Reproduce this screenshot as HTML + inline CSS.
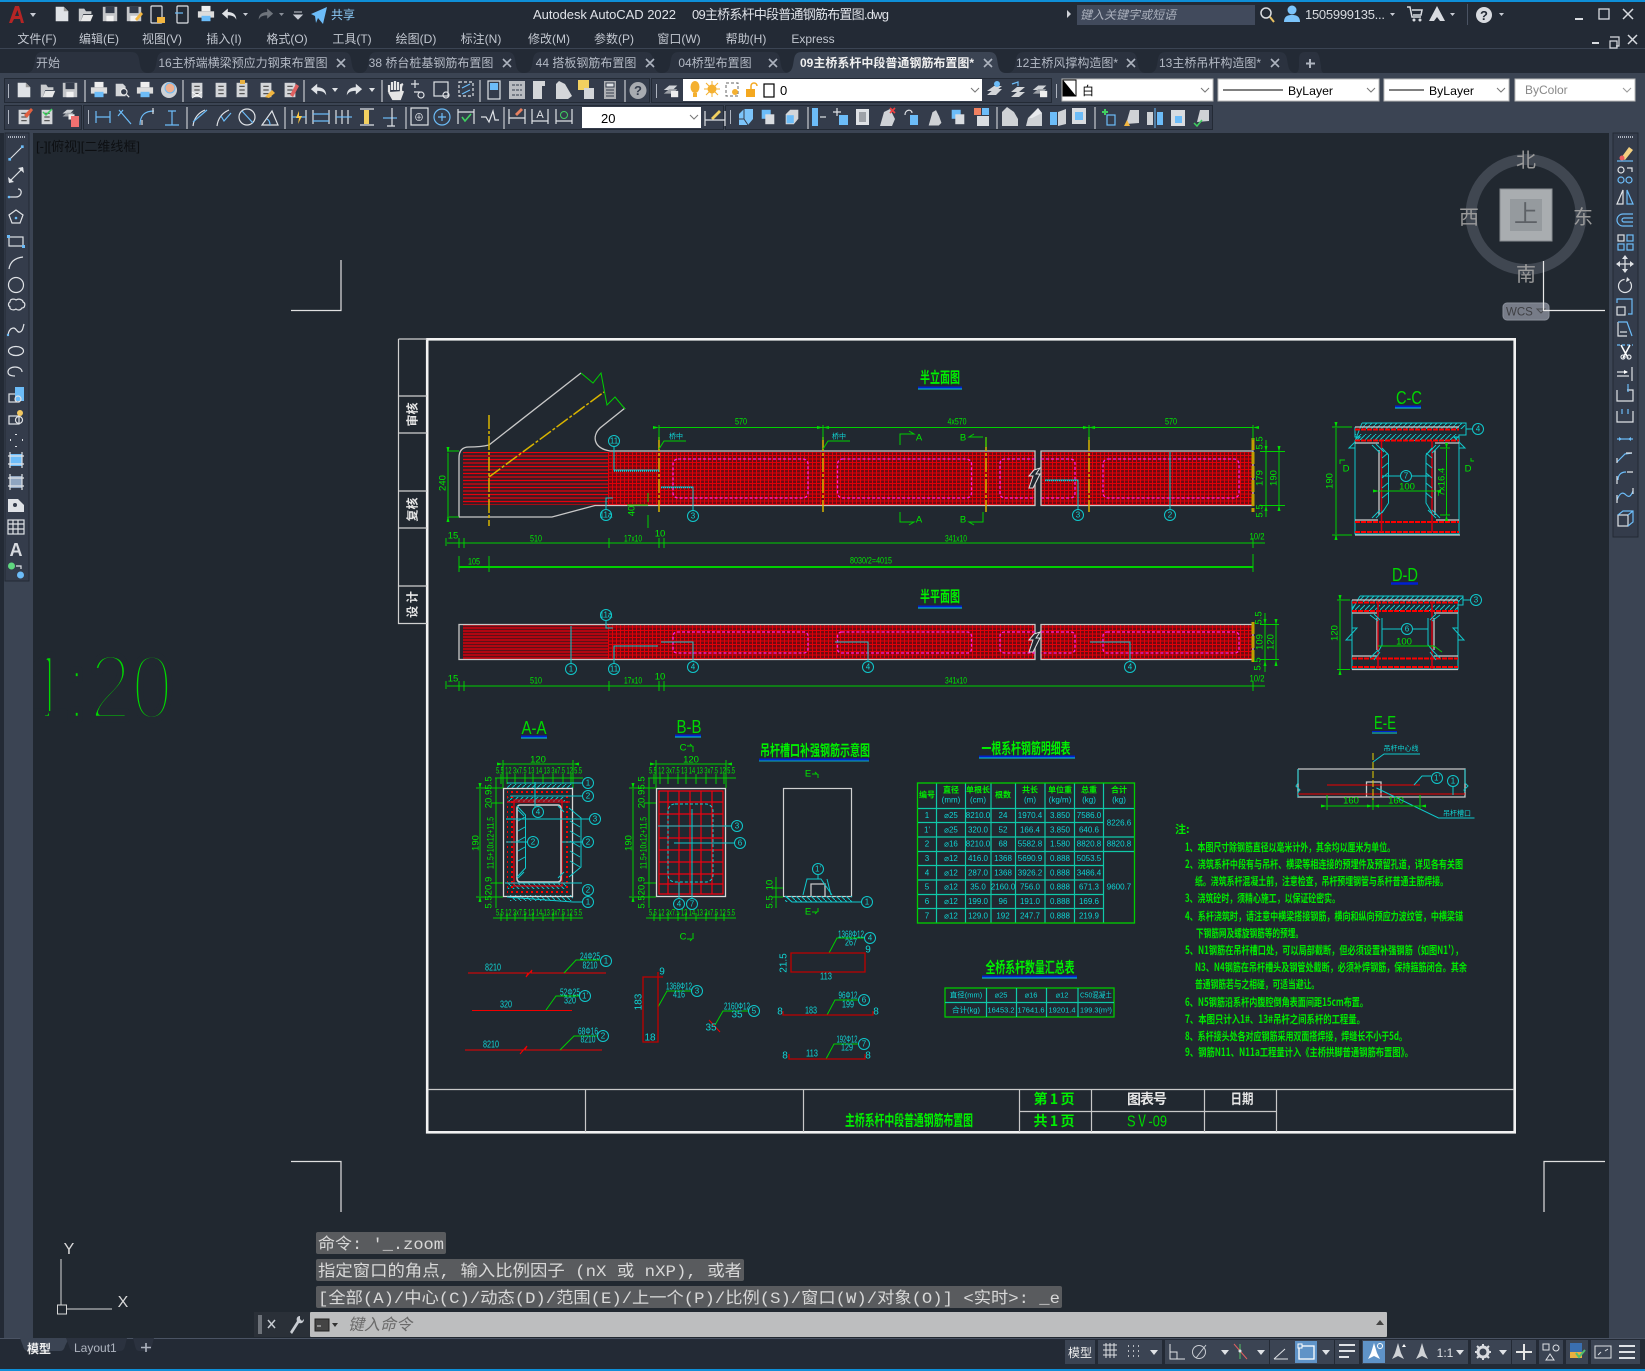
<!DOCTYPE html>
<html lang="zh"><head><meta charset="utf-8"><title>AutoCAD 2022</title>
<style>
html,body{margin:0;padding:0;width:1645px;height:1371px;overflow:hidden;background:#212830}
svg{display:block;position:absolute;left:0;top:0}
text{font-family:"Liberation Sans","Noto Sans CJK SC",sans-serif}
.m{font-size:12px;fill:#c2c7d0;text-anchor:middle}
.tb{font-size:12px;fill:#b4bac5;text-anchor:middle}
.x{stroke:#aeb4bf;stroke-width:1.6;fill:none}
.gt{font-size:9.5px;fill:#00e800;text-anchor:middle;dominant-baseline:central}
.ct{font-size:9px;fill:#10d4d4;text-anchor:middle;dominant-baseline:central}
.t8 .ct{font-size:8px}
.t7 .ct{font-size:7.5px}
.t10 .ct{font-size:10px}
.wt{font-family:"Noto Sans CJK SC",sans-serif;font-weight:700;fill:#e6e6e6;text-anchor:middle;dominant-baseline:central}
.h{font-family:"Noto Sans CJK SC",sans-serif;font-weight:700;fill:#00f000;text-anchor:middle;dominant-baseline:central}
.nt{font-family:"Noto Sans CJK SC",sans-serif;font-weight:700;font-size:11px;fill:#00e800}
.g{stroke:#00d000;fill:none;stroke-width:1}
.da{stroke:#00d000;fill:none;stroke-width:1;marker-start:url(#a);marker-end:url(#a)}
.c{stroke:#10c8cc;fill:none;stroke-width:1}
.w{stroke:#c8c8c8;fill:none;stroke-width:1.3}
.r{stroke:#f00000;fill:none;stroke-width:1}
.dr{stroke:#c00000;fill:none;stroke-width:1.3}
.mg{stroke:#ff20e0;fill:none;stroke-width:1.3;stroke-dasharray:3 2}
.y{stroke:#d8b400;fill:none;stroke-width:1.5;stroke-dasharray:14 2 3 2}
.ci{stroke:#10c8cc;fill:#212830;stroke-width:1}
.n{font-size:8px;fill:#10d4d4;text-anchor:middle;dominant-baseline:central}
.cmd{font-family:"Liberation Mono","Noto Sans CJK SC",monospace;font-size:16px;fill:#d8d8d8}
.i{fill:none;stroke:#dfe2e6;stroke-width:1.2}
.b{fill:none;stroke:#6cbcf8;stroke-width:1.2}
.f{fill:#dfe2e6}
.fb{fill:#6cbcf8}
</style></head><body>
<svg width="1645" height="1371" viewBox="0 0 1645 1371" xmlns="http://www.w3.org/2000/svg">
<defs>
<marker id="a" markerWidth="6" markerHeight="4" refX="0" refY="2" orient="auto-start-reverse" markerUnits="userSpaceOnUse"><path d="M0 2L6 0.5V3.5z" fill="#00e000"/></marker>
<pattern id="grid" width="4" height="3.5" patternUnits="userSpaceOnUse"><rect width="4" height="3.5" fill="#6e0a12"/><path d="M.5 0V3.5M0 .5H4" stroke="#e00008" stroke-width="1"/></pattern>
<pattern id="st" width="4" height="3.5" patternUnits="userSpaceOnUse"><rect width="4" height="3.5" fill="#3a1c24"/><path d="M0 1H4" stroke="#e8000c" stroke-width="1.200"/></pattern>
<pattern id="st2" width="4" height="3" patternUnits="userSpaceOnUse"><rect width="4" height="3" fill="#5e1018"/><path d="M0 1H4" stroke="#e8000c" stroke-width="1.200"/></pattern>
<pattern id="hat" width="5" height="5" patternUnits="userSpaceOnUse"><path d="M0 5L5 0" stroke="#10c8cc" stroke-width="1"/></pattern>
<pattern id="hat2" width="5" height="5" patternUnits="userSpaceOnUse"><path d="M0 0L5 5" stroke="#10c8cc" stroke-width="1"/></pattern>
<pattern id="rdot" width="5" height="5" patternUnits="userSpaceOnUse"><rect x="1" y="1" width="2" height="2" fill="#f00"/></pattern>
<pattern id="dots" width="2" height="2" patternUnits="userSpaceOnUse"><rect width="1" height="2" fill="#aeb4bf"/></pattern>
<symbol id="doc" viewBox="0 0 20 20"><path class="f" d="M3 2h9l5 5v11H3z"/><path d="M12 2v5h5" fill="#999"/></symbol>
<symbol id="fold" viewBox="0 0 20 20"><path fill="#c9cbce" d="M2 18V4h6l2 3h6v3H7l-3 8z"/><path fill="#e8e8e8" d="M7 11h11l-3 7H4z"/></symbol>
<symbol id="save" viewBox="0 0 20 20"><path fill="#c4c6c9" d="M2 2h16v16H2z"/><rect x="5" y="2" width="10" height="7" fill="#343c4b"/><rect x="6" y="12" width="8" height="6" fill="#f2f2f2"/></symbol>
<symbol id="print" viewBox="0 0 20 20"><rect x="5" y="1" width="10" height="6" fill="#eee"/><rect x="1" y="7" width="18" height="7" fill="#dcdcdc"/><rect x="5" y="12" width="10" height="6" fill="#6cbcf8"/></symbol>
<symbol id="und" viewBox="0 0 20 20"><path fill="#dfe2e6" d="M1 9l7-6v4c6 0 10 3 10 9-2-4-5-5-10-5v4z"/></symbol>
<symbol id="red" viewBox="0 0 20 20"><path fill="#dfe2e6" d="M19 9l-7-6v4C6 7 2 10 2 16c2-4 5-5 10-5v4z"/></symbol>
<symbol id="pap" viewBox="0 0 20 20"><rect x="4" y="2" width="12" height="16" fill="#d4d6d9"/><path d="M7 6h6M7 10h6M7 14h6" stroke="#555" stroke-width="1.400"/></symbol>
<symbol id="ppr" viewBox="0 0 20 20"><path fill="#d4d6d9" d="M3 3h8l3 3v11H3z"/><circle cx="12" cy="12" r="3.600" fill="#343c4b" stroke="#eee" stroke-width="1.200"/><path d="M15 15l3 3" stroke="#eee" stroke-width="1.400"/></symbol>
<symbol id="dim" viewBox="0 0 20 20"><path class="b" d="M3 4v12M17 4v12M3 10h14"/></symbol>
<symbol id="dim2" viewBox="0 0 20 20"><path class="i" d="M3 3v14M17 3v14"/><path class="b" d="M3 10h14"/><path fill="#ffc940" d="M10 4l-3 7h3l-1 6 4-8h-3z"/></symbol>
<symbol id="bl" viewBox="0 0 20 20"><rect x="3" y="2" width="10" height="10" class="fb"/><rect x="7" y="7" width="10" height="11" fill="#d9dce0"/></symbol>
<symbol id="bl2" viewBox="0 0 20 20"><path fill="#7cc4fa" d="M3 7l5-5h9v10l-5 6H3z"/><path d="M8 2v10H3M8 12l4 6" stroke="#343c4b" fill="none"/></symbol>
<symbol id="bl3" viewBox="0 0 20 20"><path fill="#d4d6d9" d="M3 7l5-5h9v10l-5 6H3z"/><rect x="4" y="8" width="8" height="9" class="fb"/></symbol>
<symbol id="lp" viewBox="0 0 20 20"><path d="M2 10l6-5h9l-5 5z" fill="#cfd2d6"/><path d="M2 14l6-5h9l-5 5z" fill="#9ea2a8"/><rect x="10" y="11" width="8" height="7" fill="#eee"/></symbol>
<symbol id="ln" viewBox="0 0 20 20"><path class="i" d="M3 17L17 3"/><rect x="1.500" y="15.500" width="3" height="3" class="fb"/><rect x="15.500" y="1.500" width="3" height="3" class="fb"/></symbol>
</defs>

<!-- base chrome -->
<rect width="1645" height="1371" fill="#232a35"/>
<rect y="0" width="1645" height="2" fill="#0e8fd8"/>
<rect y="48" width="1645" height="1" fill="#3b4453"/>
<rect y="73" width="1645" height="60" fill="#3b4453"/>
<rect x="33" y="133" width="1576" height="1205" fill="#212830"/>

<!-- scale text: eroded with canvas-coloured stroke to get a thin CAD look -->
<text transform="scale(.8,1)" x="34.500 83 112 164" y="719" font-size="93" fill="#00d800" stroke="#212830" stroke-width="6.500" stroke-linejoin="round">1:20</text>
<rect x="33" y="711" width="12" height="13" fill="#212830"/><rect x="49" y="711" width="14" height="13" fill="#212830"/>

<rect x="4" y="133" width="29" height="1205" fill="#3b4453"/>
<rect x="1609" y="133" width="36" height="1205" fill="#3b4453"/>
<rect y="1338" width="1645" height="1" fill="#4a5363"/>
<rect y="1369" width="1645" height="2" fill="#0e8fd8"/>

<!-- title bar -->
<path fill="#b52525" d="M9 23L15 6h4l5 17h-3l-1-4h-6l-2 4zm6-7h4l-1.500-6z"/>
<path d="M30 13h6l-3 4z" fill="#c8ccd4"/>
<use href="#doc" x="53" y="5" width="18" height="18"/><use href="#fold" x="77" y="5" width="18" height="18"/><use href="#save" x="101" y="5" width="18" height="18"/><use href="#save" x="125" y="5" width="18" height="18"/>
<path d="M135 19l6-7 2 2-6 7z" fill="#f2b640"/>
<rect x="151" y="6" width="11" height="17" rx="1" class="i"/><path fill="#f2b640" d="M157 17h8v6h-8z"/>
<rect x="177" y="6" width="11" height="17" rx="1" class="i"/><path d="M175 13h8" class="b"/>
<use href="#print" x="197" y="5" width="18" height="18"/>
<use href="#und" x="221" y="6" width="17" height="17"/><path d="M243 13h5l-2.500 3z" fill="#c8ccd4"/>
<use href="#red" x="257" y="6" width="17" height="17" opacity=".4"/><path d="M279 13h5l-2.500 3z" fill="#8a8f99"/>
<path d="M294 12h8M294 15h8l-4 4z" fill="#c8ccd4" stroke="#c8ccd4"/>
<path fill="#6cbcf8" d="M311 14L327 7l-4 17-5-6-2 5-1-7z"/>
<text x="331" y="19" font-size="12" fill="#8ccbf8">共享</text>
<text x="533" y="19" font-size="13" fill="#dfe2e8" textLength="143">Autodesk AutoCAD 2022</text>
<text x="692" y="19" font-size="13" fill="#dfe2e8" textLength="197">09主桥系杆中段普通钢筋布置图.dwg</text>
<path d="M1067 10l4 4-4 4z" fill="#cfd2d8"/>
<rect x="1077" y="5" width="178" height="20" fill="#414a5c"/>
<text x="1080" y="19" font-size="12" font-style="italic" fill="#aab0bc">键入关键字或短语</text>
<circle cx="1266" cy="13" r="5" fill="none" stroke="#d8dbe0" stroke-width="1.500"/><path d="M1270 17l4 5" stroke="#e8c060" stroke-width="2"/>
<circle cx="1292" cy="10" r="4.500" fill="#7cc4fa"/><path d="M1284 22c0-6 4-7 8-7s8 1 8 7z" fill="#7cc4fa"/>
<text x="1305" y="19" font-size="13" fill="#d8dbe0" textLength="80">1505999135...</text>
<path d="M1390 13h5l-2.500 3z" fill="#c8ccd4"/>
<path d="M1407 7h3l2 10h9M1412 10h10l-1 5h-8" fill="none" stroke="#d8dbe0" stroke-width="1.500"/><circle cx="1414" cy="20" r="1.500" fill="#d8dbe0"/><circle cx="1420" cy="20" r="1.500" fill="#d8dbe0"/>
<path d="M1437 6l8 15h-5l-3-4-3 4h-5z" fill="#d8dbe0"/><path d="M1450 13h5l-2.500 3z" fill="#c8ccd4"/>
<rect x="1467" y="4" width="1" height="21" fill="#4a5363"/>
<circle cx="1484" cy="15" r="8" fill="#d8dbe0"/><text x="1484" y="20" font-size="13" font-weight="700" fill="#232a35" text-anchor="middle">?</text>
<path d="M1499 13h5l-2.500 3z" fill="#c8ccd4"/>
<path d="M1575 19h8" stroke="#d8dbe0" stroke-width="2"/><rect x="1599" y="9" width="10" height="10" fill="none" stroke="#d8dbe0" stroke-width="1.300"/><path d="M1623 9l10 10M1633 9l-10 10" stroke="#d8dbe0" stroke-width="1.500"/>
<path d="M1592 43h7" stroke="#d8dbe0" stroke-width="2"/><path d="M1610 37h9v9h-3M1610 41h7v7h-7z" fill="none" stroke="#d8dbe0" stroke-width="1.200"/><path d="M1628 35l9 9M1637 35l-9 9" stroke="#d8dbe0" stroke-width="1.500"/>

<!-- menu -->
<g class="m">
<text class="m" x="37" y="43">文件(F)</text><text class="m" x="99" y="43">编辑(E)</text><text class="m" x="162" y="43">视图(V)</text><text class="m" x="224" y="43">插入(I)</text><text class="m" x="287" y="43">格式(O)</text><text class="m" x="352" y="43">工具(T)</text><text class="m" x="416" y="43">绘图(D)</text><text class="m" x="481" y="43">标注(N)</text><text class="m" x="549" y="43">修改(M)</text><text class="m" x="614" y="43">参数(P)</text><text class="m" x="679" y="43">窗口(W)</text><text class="m" x="746" y="43">帮助(H)</text><text class="m" x="813" y="43">Express</text>
</g>

<!-- tabs -->
<g fill="#2b323f">
<path d="M26 73c5 0 7-3 8-8l1-6c1-5 3-7 8-7h88c5 0 7 2 8 7l1 6c1 5 3 8 8 8z"/>
<path d="M148 73c5 0 7-3 8-8l1-6c1-5 3-7 8-7h178c5 0 7 2 8 7l1 6c1 5 3 8 8 8z"/>
<path d="M360 73c5 0 7-3 8-8l1-6c1-5 3-7 8-7h130c5 0 7 2 8 7l1 6c1 5 3 8 8 8z"/>
<path d="M524 73c5 0 7-3 8-8l1-6c1-5 3-7 8-7h104c5 0 7 2 8 7l1 6c1 5 3 8 8 8z"/>
<path d="M662 73c5 0 7-3 8-8l1-6c1-5 3-7 8-7h93c5 0 7 2 8 7l1 6c1 5 3 8 8 8z"/>
<path d="M1007 73c5 0 7-3 8-8l1-6c1-5 3-7 8-7h105c5 0 7 2 8 7l1 6c1 5 3 8 8 8z"/>
<path d="M1149 73c5 0 7-3 8-8l1-6c1-5 3-7 8-7h113c5 0 7 2 8 7l1 6c1 5 3 8 8 8z"/>
<path d="M1295 73c3 0 4-3 4-8v-6c0-5 2-7 6-7h10c3 0 4 3 5 8l1 6c0 4 1 7 3 7z"/>
</g>
<path fill="#3b4453" d="M785 73c5 0 7-3 8-8l1-6c1-5 3-7 8-7h187c5 0 7 2 8 7l1 6c1 5 3 8 8 8z"/>
<text class="tb" x="48" y="67">开始</text>
<text class="tb" x="243" y="67">16主桥端横梁预应力钢束布置图</text>
<text class="tb" x="431" y="67">38 桥台桩基钢筋布置图</text>
<text class="tb" x="586" y="67">44 搭板钢筋布置图</text>
<text class="tb" x="715" y="67">04桥型布置图</text>
<text class="tb" x="887" y="67" font-weight="700" style="fill:#f0f0f0">09主桥系杆中段普通钢筋布置图*</text>
<text class="tb" x="1067" y="67">12主桥风撑构造图*</text>
<text class="tb" x="1210" y="67">13主桥吊杆构造图*</text>
<path class="x" d="M337 59l8 8M345 59l-8 8M503 59l8 8M511 59l-8 8M646 59l8 8M654 59l-8 8M769 59l8 8M777 59l-8 8M984 59l8 8M992 59l-8 8M1127 59l8 8M1135 59l-8 8M1271 59l8 8M1279 59l-8 8"/>
<path d="M1310 59v9M1306 63.500h9" stroke="#aeb4bf" stroke-width="2"/>

<!-- toolbar panels -->
<g fill="#343c4b" stroke="#232a35">
<rect x="4.500" y="78.500" width="645" height="24"/><rect x="651.500" y="78.500" width="400" height="24"/>
<rect x="4.500" y="105.500" width="77" height="24"/><rect x="83.500" y="105.500" width="640" height="24"/><rect x="725.500" y="105.500" width="487" height="24"/>
</g>
<rect x="7" y="84" width="2" height="14" fill="url(#dots)"/><rect x="655" y="84" width="2" height="14" fill="url(#dots)"/><rect x="7" y="110" width="2" height="14" fill="url(#dots)"/><rect x="87" y="110" width="2" height="14" fill="url(#dots)"/><rect x="729" y="110" width="2" height="14" fill="url(#dots)"/><rect x="1056" y="84" width="2" height="14" fill="url(#dots)"/>
<path d="M85 80v22M183 80v22M304 80v22M382 80v22M480 80v22M625 80v22M187 107v22M285 107v22M406 107v22M504 107v22M808 107v22M997 107v22M1095 107v22" stroke="#e4e6ea" stroke-width="1"/>

<!-- row 1 icons -->
<use href="#doc" x="15" y="81" width="18" height="18"/><use href="#fold" x="39" y="81" width="18" height="18"/><use href="#save" x="61" y="81" width="18" height="18"/>
<use href="#print" x="90" y="81" width="18" height="18"/><use href="#ppr" x="113" y="81" width="18" height="18"/><use href="#print" x="136" y="81" width="18" height="18"/>
<circle cx="169" cy="90" r="8" fill="#cfd2d6"/><circle cx="170" cy="88" r="5" fill="#f0b090" stroke="#6cbcf8"/>
<use href="#pap" x="188" y="81" width="18" height="18"/><path d="M192 92l10 6M202 92l-10 6" stroke="#fff"/><use href="#pap" x="212" y="81" width="18" height="18"/><use href="#pap" x="233" y="81" width="18" height="18"/><rect x="240" y="80" width="5" height="4" fill="#e8b040"/><use href="#pap" x="257" y="81" width="18" height="18"/><path d="M265 97l7-7 3 3-6 5z" fill="#f2b640"/><use href="#pap" x="281" y="81" width="18" height="18"/><path d="M290 95l6-11 3 2-6 11z" fill="#e06060"/>
<use href="#und" x="310" y="81" width="18" height="18"/><path d="M332 88h6l-3 4z" fill="#dfe2e6"/><use href="#red" x="345" y="81" width="18" height="18"/><path d="M369 88h6l-3 4z" fill="#dfe2e6"/>
<path d="M389 92V85M392 90V82M395 90V81M398 90V82M401 92V85l2-1M389 92l4 7h7l3-8" stroke="#e6e6e6" stroke-width="2.200" fill="#e6e6e6"/>
<path class="i" d="M411 84h8M415 80v8M414 92h6"/><circle cx="421" cy="95" r="3" class="i"/>
<rect x="434" y="82" width="14" height="14" class="i"/><circle cx="446" cy="95" r="3" class="i"/>
<path class="i" d="M459 82h14v14h-14z" stroke-dasharray="3 2"/><path class="b" d="M462 88l8-4M462 94l8-4"/>
<rect x="488" y="81" width="12" height="18" class="i"/><rect x="490" y="83" width="8" height="7" class="fb"/>
<rect x="509" y="81" width="16" height="18" fill="#b9bcc1"/><path d="M512 85h10M512 90h10M512 95h10" stroke="#343c4b" stroke-dasharray="3 1"/>
<path fill="#d4d6d9" d="M533 81h12v5h-3v13h-9z"/><path fill="#d4d6d9" d="M556 99V84l3-3 6 3 7 12-4 3z"/>
<rect x="578" y="80" width="11" height="10" fill="#f2d060"/><rect x="584" y="88" width="10" height="11" fill="#d4d6d9"/>
<rect x="604" y="81" width="12" height="18" fill="#aeb0b4"/><path d="M606 83h8v4h-8zM606 90h8M606 93h8M606 96h8" stroke="#343c4b" fill="#dfe2e6"/>
<circle cx="638" cy="90.500" r="8.500" fill="#a8abb0"/><text x="638" y="95" font-size="13" font-weight="700" fill="#343c4b" text-anchor="middle">?</text>
<use href="#lp" x="662" y="81" width="18" height="18"/>
<rect x="683" y="79" width="299" height="22" fill="#fff"/>
<ellipse cx="695" cy="87" rx="4.500" ry="6" fill="#f4b030"/><rect x="693" y="93" width="4" height="4" fill="#f4b030"/>
<circle cx="712" cy="89" r="4.500" fill="#f4b030"/><path d="M712 81v16M704 89h16M706 83l12 12M718 83l-12 12" stroke="#f4b030"/>
<rect x="726" y="83" width="12" height="13" fill="none" stroke="#666" stroke-dasharray="3 2"/><circle cx="735" cy="92" r="3" fill="#f4b030"/>
<rect x="746" y="89" width="9" height="8" fill="#f4a820"/><path d="M751 89v-3c0-4 6-4 6 0" stroke="#f4a820" stroke-width="1.500" fill="none"/>
<rect x="764" y="84" width="10" height="13" fill="#fff" stroke="#000" stroke-width="1.200"/>
<text x="780" y="95" font-size="13" fill="#000">0</text>
<path d="M971 88l4 4 4-4" fill="none" stroke="#777"/>
<path d="M987 95l7-6h8l-6 6zM987 91l7-5h8l-6 5z" fill="#d4d6d9"/><circle cx="997" cy="84" r="3" class="fb"/>
<path d="M1011 97l6-5h8l-6 5zM1011 92l6-5h8l-6 5z" fill="#d4d6d9"/><path d="M1012 84l6-2v4" class="b"/>
<use href="#lp" x="1031" y="81" width="18" height="18"/>

<rect x="1062" y="79" width="151" height="22" fill="#fff" stroke="#bbb"/><rect x="1063" y="80" width="13" height="16" fill="#fff" stroke="#000"/><path d="M1063 80l13 16h-13z" fill="#000"/>
<text x="1082" y="95" font-size="12" fill="#000">白</text><path d="M1201 88l4 4 4-4" fill="none" stroke="#777"/>
<rect x="1218" y="79" width="161" height="22" fill="#fff" stroke="#bbb"/><path d="M1223 90h60" stroke="#000"/><text x="1288" y="95" font-size="12" fill="#000" textLength="45" lengthAdjust="spacingAndGlyphs">ByLayer</text><path d="M1367 88l4 4 4-4" fill="none" stroke="#777"/>
<rect x="1384" y="79" width="125" height="22" fill="#fff" stroke="#bbb"/><path d="M1389 90h35" stroke="#000"/><text x="1429" y="95" font-size="12" fill="#000" textLength="45" lengthAdjust="spacingAndGlyphs">ByLayer</text><path d="M1497 88l4 4 4-4" fill="none" stroke="#777"/>
<rect x="1515" y="79" width="120" height="22" fill="#fff" stroke="#bbb"/><text x="1525" y="94" font-size="12" fill="#888">ByColor</text><path d="M1623 88l4 4 4-4" fill="none" stroke="#999"/>

<!-- row 2 icons -->
<use href="#pap" x="15" y="108" width="18" height="18"/><path d="M24 115l7-7 2 2-6 8z" fill="#e06040"/><use href="#pap" x="38" y="108" width="18" height="18"/><path d="M43 112l3 3 6-6" stroke="#3ed060" fill="none" stroke-width="1.500"/>
<use href="#lp" x="61" y="106" width="15" height="15"/><rect x="71" y="116" width="8" height="11" fill="#f07070"/>
<use href="#dim" x="93" y="107" width="20" height="20"/><path class="b" d="M119 110l12 14M118 116l5-6"/><path class="b" d="M140 125c0-10 5-14 14-14"/><path d="M142 125v-5M153 108v6" class="i"/><path class="b" d="M165 125h14M172 125v-14M168 111h8"/>
<path class="i" d="M193 126c1-8 5-13 12-16"/><path class="b" d="M193 122l14-12"/><path class="i" d="M217 126c1-8 5-13 12-16"/><path class="b" d="M221 116l3 5 7-8"/>
<circle cx="247" cy="117" r="8" class="i"/><path class="b" d="M242 111l11 12"/><path class="i" d="M262 125h16l-6-14z"/><path class="b" d="M270 125c0-3-1-5-3-6"/>
<use href="#dim2" x="289" y="107" width="20" height="20"/><path class="i" d="M313 110v14M329 110v14"/><path class="b" d="M313 114h16M313 121h16"/><path class="i" d="M336 110v14M342 110v14M348 110v14"/><path class="b" d="M336 117h16"/>
<path d="M360 109h14M360 125h14" class="i"/><rect x="364" y="110" width="5" height="14" fill="#f2d060"/><path d="M383 118h14" class="b"/><path d="M392 108v18M387 126h8" class="i"/>
<rect x="411" y="108" width="17" height="17" class="i"/><text x="419" y="121" font-size="10" fill="#dfe2e6" text-anchor="middle">⊕</text>
<circle cx="442" cy="117" r="8" class="b"/><path d="M438 117h8M442 113v8" class="b"/>
<path d="M458 109v15M474 109v15M458 112h16" class="i"/><path d="M462 117l3 4 6-7" stroke="#40d060" stroke-width="1.600" fill="none"/>
<path class="i" d="M481 117h5l3 5 4-11 2 9h4"/>
<path d="M509 109v15M525 109v15M509 118h16" class="i"/><path d="M515 114l6-6 2 2-6 6z" fill="#e88060"/>
<path d="M532 109v15M548 109v15M532 121h16" class="i"/><text x="540" y="118" font-size="11" fill="#dfe2e6" text-anchor="middle">A</text>
<path d="M556 109v15M572 109v15M556 121h16" class="i"/><circle cx="564" cy="115" r="3.500" stroke="#40d060" fill="none"/>
<rect x="582" y="107" width="119" height="21" fill="#fff"/><text x="601" y="123" font-size="13" fill="#000">20</text><path d="M690 115l4 4 4-4" fill="none" stroke="#777"/>
<path d="M705 111v15M725 111v15M705 120h20" class="i"/><path d="M711 118l8-8 2 2-8 8z" fill="#f2d060"/>
<use href="#bl2" x="736" y="107" width="20" height="20"/><use href="#bl" x="759" y="108" width="18" height="18"/><use href="#bl3" x="783" y="108" width="18" height="18"/>
<path class="fb" d="M812 108h6v18h-6z"/><path d="M820 117h6" class="i"/>
<path d="M833 112h8M837 108v8" class="i"/><rect x="839" y="115" width="9" height="10" class="fb"/><rect x="856" y="109" width="13" height="16" class="f"/><rect x="859" y="112" width="7" height="10" fill="#9ea2a8"/>
<path d="M880 126l4-14 6-3 5 10-3 7z" fill="#cfd2d6"/><path d="M890 108l5 5M895 108l-5 5" stroke="#f04040" stroke-width="1.600"/>
<path d="M905 115c0-6 7-6 7-2" class="i"/><rect x="910" y="115" width="8" height="10" class="fb"/>
<path d="M928 126l4-14 5-3 5 14-3 3zM936 109l7 14" fill="#cfd2d6" stroke="#343c4b"/><use href="#bl" x="949" y="108" width="18" height="18"/>
<rect x="974" y="108" width="7" height="7" fill="#f08060"/><rect x="982" y="108" width="7" height="7" class="fb"/><rect x="977" y="116" width="12" height="10" fill="#d9dce0"/>
<path d="M1002 126v-14l5-5 7 5 4 7v7z" fill="#cfd2d6"/><path d="M1026 126l2-8 10-10 4 5v13z" fill="#cfd2d6"/><path d="M1029 118l9-10 4 5-10 5z" fill="#e8eaee"/>
<rect x="1050" y="112" width="7" height="13" class="fb"/><path d="M1058 112l8-3v15l-8 2z" fill="#cfd2d6"/>
<rect x="1072" y="108" width="14" height="16" fill="#d9dce0"/><rect x="1075" y="112" width="8" height="8" class="fb"/>
<path d="M1102 112h6M1105 109v6" stroke="#40d060" stroke-width="2"/><rect x="1107" y="115" width="8" height="10" class="i" style="stroke:#6cbcf8"/>
<path d="M1126 124l4-14h9v13z" fill="#cfd2d6"/><path d="M1124 126l3-6 3 6z" fill="#f2b640"/>
<path d="M1147 112h6v13h-6z" fill="#cfd2d6"/><path d="M1157 112h6v13h-6z" class="fb"/><path d="M1155 108v20" stroke="#6cbcf8"/>
<rect x="1171" y="110" width="14" height="16" fill="#d9dce0"/><rect x="1175" y="116" width="7" height="7" class="fb"/>
<path d="M1197 122l3-12h9v11z" fill="#cfd2d6"/><path d="M1194 123l3 3 5-6" stroke="#40d060" stroke-width="1.500" fill="none"/>

<!-- left palette -->
<rect x="5" y="133" width="24" height="448" fill="#343c4b" stroke="#232a35"/>
<rect x="8" y="136" width="17" height="2" fill="url(#dots)"/>
<use href="#ln" x="7" y="144" width="18" height="18"/>
<g transform="translate(7,166)"><path d="M2 16L16 2" class="i"/><path d="M16 1l1 6-6-5zM2 17l-1-6 6 5z" fill="#dfe2e6"/></g>
<path class="i" d="M9 197h7c6 0 7-8 2-8"/><circle cx="9" cy="197" r="1.300" class="fb"/>
<path class="i" d="M16 210l7 5-3 8h-8l-3-8z"/><circle cx="16" cy="218" r="1.300" class="fb"/>
<rect x="9" y="237" width="14" height="9" class="i"/><rect x="7" y="235" width="3" height="3" class="fb"/><rect x="22" y="245" width="3" height="3" class="fb"/>
<path class="i" d="M9 269c1-7 6-11 14-12"/><circle cx="16" cy="285" r="7.500" class="i"/>
<path class="i" d="M10 302c0-4 5-3 6-2 3-2 7 0 7 2 3 1 2 6-1 6-2 3-5 2-6 1-3 2-7 0-6-2-2-1-2-4 0-5z"/>
<path class="i" d="M8 335c1-6 4-7 6-7 3 1 3 5 6 4 3-1 3-5 4-8"/><circle cx="8" cy="335" r="1.200" class="fb"/>
<ellipse cx="16" cy="351" rx="7.500" ry="4.500" class="i"/><path class="i" d="M22 372c0-3-3-5-7-5s-7 2-7 5 3 4 7 4"/>
<rect x="9" y="394" width="10" height="8" class="i"/><rect x="15" y="387" width="9" height="14" class="fb"/><circle cx="18" cy="399" r="3" class="i"/>
<rect x="9" y="416" width="10" height="8" class="i"/><circle cx="19" cy="420" r="3.500" class="i"/><circle cx="20" cy="413" r="3" fill="#f2c860"/>
<path d="M16 434v1M10 440h1M22 440h1M16 446v1" stroke="#dfe2e6" stroke-width="2"/>
<rect x="10" y="454" width="12" height="12" fill="#6cbcf8"/><path d="M8 456h16M8 464h16M10 452v16M22 452v16" class="i"/>
<rect x="10" y="476" width="12" height="12" fill="#8fa5c0"/><path d="M8 478h16M8 486h16M10 474v16M22 474v16" class="i"/>
<path d="M8 499h10l6 6v7H8z" class="f"/><circle cx="15" cy="505" r="2" fill="#343c4b"/>
<rect x="8" y="520" width="16" height="14" class="i"/><path d="M8 524h16M8 529h16M13 520v14M18 520v14" class="i"/>
<text x="16" y="556" font-size="18" font-weight="700" fill="#d8dbe0" text-anchor="middle">A</text>
<circle cx="11.500" cy="566" r="3.500" fill="#60d880"/><circle cx="20.500" cy="575" r="3.500" fill="#6cbcf8"/><path d="M16 566h5v3" class="i"/>

<!-- right palette -->
<rect x="1613" y="133" width="25" height="404" fill="#343c4b" stroke="#232a35"/>
<rect x="1617" y="136" width="17" height="2" fill="url(#dots)"/>
<g>
<path d="M1621 158l8-11 4 3-8 10z" fill="#f4d080"/><circle cx="1622" cy="158" r="2.500" fill="#f06060"/><path class="b" d="M1617 161h16"/>
<circle cx="1621" cy="170" r="3" class="i"/><path class="i" d="M1627 168h5v4"/><circle cx="1621" cy="180" r="3" class="b"/><circle cx="1629" cy="180" r="3" class="b"/>
<path class="i" d="M1617 204l6-14v14z"/><path class="b" d="M1633 204l-6-14v14z"/>
<path class="b" d="M1633 214h-10a5 5 0 000 12h10M1633 218h-9a2 2 0 000 4h9"/>
<rect x="1618" y="235" width="6" height="6" class="i"/><rect x="1627" y="235" width="6" height="6" class="b"/><rect x="1618" y="244" width="6" height="6" class="b"/><rect x="1627" y="244" width="6" height="6" class="b"/>
<path d="M1625 256v16M1617 264h16" class="i"/><path d="M1625 255l-3 4h6zM1625 273l-3-4h6zM1616 264l4-3v6zM1634 264l-4-3v6z" fill="#dfe2e6"/>
<circle cx="1625" cy="286" r="6.500" class="i" stroke-dasharray="30 6"/><path d="M1627 277l3 3-4 2z" fill="#dfe2e6"/>
<rect x="1617" y="307" width="8" height="8" class="i"/><path class="b" d="M1617 303v-4h15v15h-4"/>
<path class="i" d="M1618 322v14h9"/><path class="b" d="M1618 322h9l5 14"/><path class="i" d="M1620 332h7"/>
<path class="b" d="M1617 345h16" stroke-dasharray="3 2"/><path d="M1621 345l7 13M1630 345l-7 13" stroke="#fff" stroke-width="1.500"/><circle cx="1623" cy="357" r="2" class="i"/><circle cx="1629" cy="357" r="2" class="i"/>
<path class="i" d="M1617 376h12M1617 372h10M1632 367v14"/><path d="M1628 372l-4-2v4z" fill="#fff"/>
<path class="i" d="M1617 390v11h16v-11h-6"/><path class="b" d="M1628 384v8"/>
<path class="i" d="M1617 411v11h16v-11"/><path class="b" d="M1622 409v5M1628 409v5"/>
<path class="b" d="M1617 439h16"/><path d="M1622 439l-3-2v4zM1628 439l3-2v4z" fill="#6cbcf8"/>
<path class="b" d="M1617 462l8-8 7-1"/><path class="i" d="M1617 458v5M1626 453h6"/>
<path class="b" d="M1618 480c0-4 2-8 8-8"/><path class="i" d="M1617 476v8M1627 472h6"/>
<path class="b" d="M1617 500c3-8 6-8 9-5s5 1 7-4"/><path class="i" d="M1617 495v8M1633 488v6"/>
<rect x="1618" y="515" width="10" height="11" class="i"/><path class="b" d="M1618 515l5-4h10v11l-5 4M1628 515l5-4"/>
</g>

<!-- viewport label -->
<text x="36" y="151" font-size="13" fill="#0d0f12">[-][俯视][二维线框]</text>

<!-- viewport corner marks -->
<path d="M291 310.500H341V260M291 1161.500H341V1212M1605 1161.500H1544V1212" fill="none" stroke="#e0e0e0" stroke-width="1.200"/>

<!-- compass -->
<circle cx="1526" cy="214.500" r="55" fill="none" stroke="#404751" stroke-width="11"/>
<rect x="1500" y="189" width="52" height="52" fill="#a9adb0" stroke="#888c90"/>
<rect x="1510" y="199" width="32" height="32" fill="#959a9e"/>
<text x="1526" y="222" font-size="24" fill="#5d6166" text-anchor="middle">上</text>
<g font-size="20" fill="#9a9a9a" text-anchor="middle"><text x="1526" y="167">北</text><text x="1526" y="281">南</text><text x="1583" y="224">东</text><text x="1469" y="224">西</text></g>
<rect x="1503" y="303" width="46" height="17" rx="4" fill="#777c88" stroke="#8a8f9a"/>
<text x="1506" y="315.500" font-size="11.500" fill="#3f4044">WCS</text>
<path d="M1537 309h8l-4 4z" fill="none" stroke="#4a4c50"/>
<path d="M1543.500 261V310.500H1605" fill="none" stroke="#e8e8e8" stroke-width="1.200"/>

<!-- drawing frame -->
<rect x="427.200" y="339.300" width="1087.500" height="793" fill="none" stroke="#f2f2f2" stroke-width="2.600"/>
<path d="M398.500 339V623.500H427M398.500 339H427M398 396H427M398 433H427M398 491H427M398 528H427M398 586H427" fill="none" stroke="#d0d0d0" stroke-width="1.200"/>
<g class="wt" font-size="12">
<text class="wt" font-size="12" transform="rotate(-90 412 414.500)" x="412" y="414.500">审核</text>
<text class="wt" font-size="12" transform="rotate(-90 412 509.500)" x="412" y="509.500">复核</text>
<text class="wt" font-size="12" transform="rotate(-90 412 604.500)" x="412" y="604.500">设 计</text>
</g>

<!-- title block -->
<path d="M428 1089.500H1514M585.500 1089V1132M803.500 1089V1132M1019.500 1089V1132M1091.500 1089V1132M1204.500 1089V1132M1276.500 1089V1132M1019 1111.500H1276" fill="none" stroke="#c8c8c8" stroke-width="1.200"/>
<text class="h" font-size="15" x="909" y="1120" textLength="128" lengthAdjust="spacingAndGlyphs">主桥系杆中段普通钢筋布置图</text>
<text class="h" font-size="14" x="1054" y="1099" textLength="41" lengthAdjust="spacing">第1页</text><text class="h" font-size="14" x="1054" y="1121" textLength="41" lengthAdjust="spacing">共1页</text>
<text class="wt" font-size="14" x="1147" y="1099" textLength="40" lengthAdjust="spacing">图表号</text><text class="wt" font-size="14" x="1242" y="1099" textLength="23" lengthAdjust="spacingAndGlyphs">日期</text>
<text x="1147" y="1122" font-size="16" fill="#00d800" text-anchor="middle" dominant-baseline="central" textLength="40" lengthAdjust="spacingAndGlyphs">SⅤ-09</text>

<!-- half elevation -->
<rect x="463" y="452" width="147" height="53" fill="url(#st)"/>
<rect x="608" y="452" width="427" height="53" fill="url(#grid)"/>
<rect x="1041" y="452" width="212" height="53" fill="url(#grid)"/>
<path class="w" d="M459 510V458c0-8 4-11 10-11 12 0 16-1 20-2L581 373M625 408L600 428c-8 8-7 20 10 23H1035V505.500H595L552 517H459V510M1041 451H1253V505.500H1041z"/>
<path class="g" d="M581 373l12 10 8-10 6 32 8-8 10 12"/>
<path d="M1034 470l-5 6 4 0-4 12h4l7-14h-4l4-6z" fill="#212830" stroke="#ddd"/>
<path class="y" d="M489 415V526M489 477L604 392M659 437V512M823 437V512M986 437V512M1089 437V512"/>
<path d="M1253 438V512" stroke="#c0a000" stroke-width="3" stroke-dasharray="12 2"/>
<g class="mg"><rect x="673" y="459" width="135" height="39" rx="5" class="mg"/><rect x="837.500" y="459" width="134" height="39" rx="5" class="mg"/><path class="mg" d="M1035 459H1005q-5 0-5 5v29q0 5 5 5H1035M1041 459H1070q5 0 5 5v29q0 5-5 5H1041"/><rect x="1103" y="459" width="136" height="39" rx="5" class="mg"/></g>
<g class="c">
<path class="c" d="M614 447V470H659M606 510V498H613M693 511V487H661M1078 510V480H1045M1170 452V510"/>
<path d="M614 471H659M661 487.500H693M1045 480.500H1078" stroke="#10d8e0" stroke-dasharray="1 1" stroke-width="1.600"/>
</g>
<g>
<circle class="ci" cx="614" cy="441" r="5.500"/><text class="n" x="614" y="441">11</text>
<circle class="ci" cx="606" cy="515" r="5.500"/><text class="n" x="606" y="515">11a</text>
<circle class="ci" cx="693" cy="516" r="5.500"/><text class="n" x="693" y="516">3</text>
<circle class="ci" cx="1078" cy="515" r="5.500"/><text class="n" x="1078" y="515">3</text>
<circle class="ci" cx="1170" cy="515" r="5.500"/><text class="n" x="1170" y="515">2</text>
</g>
<!-- dims elevation -->
<path class="da" d="M659 427.500H823"/><path class="da" d="M823 427.500H1089"/><path class="da" d="M1089 427.500H1253"/>
<path class="g" d="M659 425V440M823 425V440M1089 425V440M1253 425V440M447 451H459M447 517H459M648 493V502M648 515V528M627 505H648"/>
<path class="da" d="M448 453V516"/>
<text class="gt" x="741" y="422" textLength="12" lengthAdjust="spacingAndGlyphs">570</text><text class="gt" x="957" y="422" textLength="19" lengthAdjust="spacingAndGlyphs">4x570</text><text class="gt" x="1171" y="422" textLength="12" lengthAdjust="spacingAndGlyphs">570</text>
<text class="gt" transform="rotate(-90 443 483)" x="443" y="483">240</text><text class="gt" transform="rotate(-90 632 511)" x="632" y="511">40</text>
<path class="g" d="M659 449l5-8h22M823 449l5-8h22"/><text class="ct" x="676" y="437" font-size="7" style="font-size:7px">桥中</text><text class="ct" x="839" y="437" style="font-size:7px">桥中</text>
<path class="g" d="M900 445V434h14l-5-3M900 512V522h14l-5 3M983 437h-14l5-3M983 512V522h-14l5 3M986 437V447"/>
<text class="gt" x="919" y="438">A</text><text class="gt" x="919" y="520">A</text><text class="gt" x="963" y="438">B</text><text class="gt" x="963" y="520">B</text>
<path class="g" d="M447 543H1265M446 538V546M459 538V548M464 538V548M609 538V548M659 538V548M664 538V548M1253 538V548"/>
<path class="g" d="M459 567H1253" stroke-width="2" style="stroke-width:2"/><path class="g" d="M459 556V572M489 556V572M1253 554V572"/>
<text class="gt" x="453" y="536">15</text><text class="gt" x="536" y="539" textLength="12" lengthAdjust="spacingAndGlyphs">510</text><text class="gt" x="633" y="539" textLength="18" lengthAdjust="spacingAndGlyphs">17x10</text><text class="gt" x="660" y="534">10</text><text class="gt" x="956" y="539" textLength="22" lengthAdjust="spacingAndGlyphs">341x10</text><text class="gt" x="1257" y="537" textLength="15" lengthAdjust="spacingAndGlyphs">10/2</text>
<text class="gt" x="474" y="562" textLength="12" lengthAdjust="spacingAndGlyphs">105</text><text class="gt" x="871" y="561" textLength="42" lengthAdjust="spacingAndGlyphs">8030/2=4015</text>
<path class="da" d="M1266 452V505"/><path class="da" d="M1279 452V505"/><path class="g" d="M1260 451.500H1285M1260 505.500H1285M1266 440V452M1266 505V517"/>
<text class="gt" transform="rotate(-90 1260 443)" x="1260" y="443">5.5</text><text class="gt" transform="rotate(-90 1260 478)" x="1260" y="478">179</text><text class="gt" transform="rotate(-90 1274 478)" x="1274" y="478">190</text><text class="gt" transform="rotate(-90 1260 511)" x="1260" y="511">5.5</text>
<!-- titles -->
<text class="h" font-size="15" x="940" y="377" textLength="40" lengthAdjust="spacingAndGlyphs">半立面图</text><path d="M918 387.500H962" stroke="#0020d0" stroke-width="2"/><path d="M918 389H962" stroke="#10d0d0"/>
<text class="h" font-size="15" x="940" y="596" textLength="40" lengthAdjust="spacingAndGlyphs">半平面图</text><path d="M918 606.500H962" stroke="#0020d0" stroke-width="2"/><path d="M918 608H962" stroke="#10d0d0"/>

<!-- half plan -->
<rect x="463" y="625" width="147" height="34" fill="url(#st2)"/>
<rect x="608" y="625" width="427" height="34" fill="url(#grid)"/>
<rect x="1041" y="625" width="212" height="34" fill="url(#grid)"/>
<path class="w" d="M459 624.500H1035V659.500H459zM1041 624.500H1253V659.500H1041z"/>
<path d="M1034 634l-5 6 4 0-4 12h4l7-14h-4l4-6z" fill="#212830" stroke="#ddd"/>
<g class="mg"><rect x="673" y="632" width="135" height="21" rx="4" class="mg"/><rect x="837.500" y="632" width="134" height="21" rx="4" class="mg"/><path class="mg" d="M1035 632H1005q-5 0-5 4v13q0 4 5 4H1035M1041 632H1070q5 0 5 4v13q0 4-5 4H1041"/><rect x="1103" y="632" width="136" height="21" rx="4" class="mg"/></g>
<path d="M1253 622V662" stroke="#c0a000" stroke-width="3" stroke-dasharray="12 2"/>
<path class="c" d="M606 620V628H613M571 626V663M614 663V646H658M693 661V642H661M868 661V642H835M1130 661V642H1090"/>
<g>
<circle class="ci" cx="606" cy="615" r="5.500"/><text class="n" x="606" y="615">11a</text>
<circle class="ci" cx="571" cy="669" r="5.500"/><text class="n" x="571" y="669">1</text>
<circle class="ci" cx="614" cy="669" r="5.500"/><text class="n" x="614" y="669">11</text>
<circle class="ci" cx="693" cy="667" r="5.500"/><text class="n" x="693" y="667">4</text>
<circle class="ci" cx="868" cy="667" r="5.500"/><text class="n" x="868" y="667">4</text>
<circle class="ci" cx="1130" cy="667" r="5.500"/><text class="n" x="1130" y="667">4</text>
</g>
<path class="g" d="M447 686H1265M446 681V689M459 681V691M464 681V691M609 681V691M659 681V691M664 681V691M1253 681V691"/>
<text class="gt" x="453" y="679">15</text><text class="gt" x="536" y="681" textLength="12" lengthAdjust="spacingAndGlyphs">510</text><text class="gt" x="633" y="681" textLength="18" lengthAdjust="spacingAndGlyphs">17x10</text><text class="gt" x="660" y="677">10</text><text class="gt" x="956" y="681" textLength="22" lengthAdjust="spacingAndGlyphs">341x10</text><text class="gt" x="1257" y="679" textLength="15" lengthAdjust="spacingAndGlyphs">10/2</text>
<path class="da" d="M1265 625V660"/><path class="da" d="M1276 625V660"/><path class="g" d="M1260 624.500H1279M1260 659.500H1279M1265 613V625M1265 660V672"/>
<text class="gt" transform="rotate(-90 1259 618)" x="1259" y="618">5.5</text><text class="gt" transform="rotate(-90 1260 642)" x="1260" y="642">109</text><text class="gt" transform="rotate(-90 1271 642)" x="1271" y="642">120</text><text class="gt" transform="rotate(-90 1258 664)" x="1258" y="664">5.5</text>

<!-- C-C -->
<text x="1409" y="404" font-size="18" fill="#00d800" text-anchor="middle" textLength="26" lengthAdjust="spacingAndGlyphs">C-C</text><path d="M1395 406.500H1421" stroke="#0020d0" stroke-width="2"/><path d="M1395 408H1421" stroke="#10d0d0"/>
<rect x="1362" y="423" width="103" height="6" fill="url(#hat)"/><rect x="1355" y="434" width="104" height="7" fill="url(#hat)"/>
<path class="c" d="M1362 423H1466V435H1459V534H1355V441L1362 423M1355 427V437h5l-11 11h6V534M1459 437h-5l11 11h-6"/>
<path class="w" d="M1355 427H1459M1355 443H1379M1435 443H1459M1355 520H1378M1436 520H1459M1355 535H1460M1379 450V515M1435 450V515"/>
<path d="M1355 429.500H1459M1355 440.500H1459M1355 522H1459M1355 532H1459" stroke="#f00" stroke-width="2" stroke-dasharray="5 1"/>
<path d="M1381.500 441V532M1432 441V532" stroke="#d00010" stroke-width="1.500"/>
<path class="c" d="M1382 448L1388.500 455V503L1382 513M1432 448L1426 455V503L1432 513"/>
<path class="c" d="M1382 458l6 -5M1382 468l6-5M1382 478l6-5M1382 488l6-5M1382 498l6-5M1432 458l-6-5M1432 468l-6-5M1432 478l-6-5M1432 488l-6-5M1432 498l-6-5M1372 445l8 8M1376 444l8 8M1372 518l8-8M1376 518l8-8M1436 445l-8 8M1440 445l-8 8M1436 518l-8-8M1440 518l-8-8"/>
<path class="c" d="M1382 476H1430M1466 429H1472"/>
<circle class="ci" cx="1406" cy="476" r="5.500"/><text class="n" x="1406" y="476">7</text><circle class="ci" cx="1478" cy="429" r="5.500"/><text class="n" x="1478" y="429">4</text>
<path class="da" d="M1336 428V534"/><path class="g" d="M1332 427H1352M1332 535H1352"/><text class="gt" transform="rotate(-90 1330 481)" x="1330" y="481">190</text>
<path class="da" d="M1379 491H1435"/><text class="gt" x="1407" y="487">100</text>
<path class="da" d="M1446.500 449V515"/><path class="g" d="M1440 448H1450M1440 515H1450"/><text class="gt" transform="rotate(-90 1442 482)" x="1442" y="482">7x16.4</text>
<text class="gt" x="1346" y="469">D</text><text class="gt" x="1468" y="469">D</text><path class="g" d="M1340 464v-4h5M1474 461h-3v-3"/>

<!-- D-D -->
<text x="1405" y="581" font-size="18" fill="#00d800" text-anchor="middle" textLength="26" lengthAdjust="spacingAndGlyphs">D-D</text><path d="M1391 583.500H1418" stroke="#0020d0" stroke-width="2.500"/>
<rect x="1360" y="596" width="103" height="6" fill="url(#hat)"/><rect x="1352" y="605" width="106" height="6" fill="url(#hat)"/>
<path class="c" d="M1360 596H1463V605H1458V669H1352V610L1360 596M1352 600V628h5l-11 12h6M1458 600V628h-5l11 12h-6"/>
<path class="w" d="M1352 600H1458M1352 613H1377M1434 613H1458M1352 656H1377M1434 656H1458M1352 669.500H1458M1377 618V650M1434 618V650"/>
<path d="M1352 602.500H1458M1352 611H1458M1352 658.500H1458M1352 667H1458" stroke="#f00" stroke-width="2" stroke-dasharray="5 1"/>
<path d="M1378 602V669M1432 602V669" stroke="#d00010" stroke-width="1.500"/>
<path class="c" d="M1382 618V645L1378 652M1428 618V645L1434 652M1382 629H1401M1413 629H1428M1463 600H1470"/>
<path class="c" d="M1370 615l8 6M1374 614l6 6M1440 615l-8 6M1436 614l-6 6M1370 658l8-8M1374 660l6-8M1440 658l-8-8M1436 660l-6-8"/>
<circle class="ci" cx="1407" cy="629" r="5.500"/><text class="n" x="1407" y="629">6</text><circle class="ci" cx="1476" cy="600" r="5.500"/><text class="n" x="1476" y="600">3</text>
<path class="da" d="M1340 601V669"/><path class="g" d="M1337 600H1350M1337 669.500H1350"/><text class="gt" transform="rotate(-90 1335 633)" x="1335" y="633">120</text>
<path class="g" d="M1378 646H1434L1442 652"/><text class="gt" x="1404" y="642">100</text>

<!-- A-A / B-B common dims -->
<g id="ab">
<path class="da" d="M503 764H573"/><path class="g" d="M503 760V788M573 760V788M495 778H583M501 774V784M507 774V784M515 774V784M525 774V784M533 774V784M543 774V784M553 774V784M563 774V784M571 774V784M493 918H583M501 913V921M507 913V921M515 913V921M525 913V921M533 913V921M543 913V921M553 913V921M563 913V921M571 913V921"/>
<text class="gt" x="538" y="760">120</text>
<text class="gt" x="539" y="771" textLength="86" lengthAdjust="spacingAndGlyphs">5.5 12 3x7.5 13 14 13 3x7.5 12 5.5</text>
<text class="gt" x="539" y="913" textLength="86" lengthAdjust="spacingAndGlyphs">5.5 12 3x7.5 13 14 13 3x7.5 12 5.5</text>
<path class="da" d="M480 789V896"/><path class="g" d="M476 788H503M476 897H503M496 778V908M491 788H503M491 803H503M491 883H503M491 897H503"/>
<text class="gt" transform="rotate(-90 476 843)" x="476" y="843">190</text>
<text class="gt" transform="rotate(-90 491 843)" x="491" y="843" textLength="52" lengthAdjust="spacingAndGlyphs">11.5+10x12+11.5</text>
<text class="gt" transform="rotate(-90 489 783)" x="489" y="783">5.5</text><text class="gt" transform="rotate(-90 489 799)" x="489" y="799">20.9</text><text class="gt" transform="rotate(-90 489 886)" x="489" y="886">20.9</text><text class="gt" transform="rotate(-90 489 902)" x="489" y="902">5.5</text>
</g>
<use href="#ab" x="153" y="0"/>

<!-- A-A -->
<text x="534" y="734" font-size="18" fill="#00d800" text-anchor="middle" textLength="25" lengthAdjust="spacingAndGlyphs">A-A</text><path d="M521 736.500H547" stroke="#0020d0" stroke-width="2"/><path d="M521 738H547" stroke="#10d0d0"/>
<rect x="507" y="784" width="66" height="5" fill="url(#hat)"/><rect x="507" y="797" width="58" height="5" fill="url(#hat)"/><rect x="507" y="883" width="60" height="6" fill="url(#hat2)"/><rect x="510" y="895" width="63" height="6" fill="url(#hat2)"/>
<rect x="503.500" y="788.500" width="69" height="108" fill="none" stroke="#d8d8d8" stroke-width="1.300"/>
<rect x="507" y="791" width="6" height="103" fill="url(#rdot)"/><rect x="564" y="791" width="6" height="103" fill="url(#rdot)"/><rect x="507" y="791" width="63" height="5" fill="url(#rdot)"/><rect x="507" y="889" width="63" height="5" fill="url(#rdot)"/>
<path d="M514 800H562V886H514zM507 802H570M507 883H570" fill="none" stroke="#e00010" stroke-width="1.300"/>
<rect x="517" y="805" width="44" height="77" rx="3" fill="#212830" stroke="#d0d0d0" stroke-width="1.600"/>
<path class="c" d="M517 806L525.500 815V868L517 877M569 808L581 818V867L569 877M506 819H590M535 782V808M510 796H582M505 883H582M507 897L573 902H582M507 783H582M525 842H528M562 842H582M506 842H525"/>
<path class="c" d="M518 821l7-4M518 831l7-4M518 841l7-4M518 851l7-4M518 861l7-4M570 821l10 6M570 831l10 6M570 841l10 6M570 851l10 6M570 861l10 6M518 810l6 6M558 806l6 6M518 878l6-6M558 878l6-6"/>
<g>
<circle class="ci" cx="588" cy="783" r="5.500"/><text class="n" x="588" y="783">1</text><circle class="ci" cx="588" cy="796" r="5.500"/><text class="n" x="588" y="796">2</text><circle class="ci" cx="595" cy="819" r="5.500"/><text class="n" x="595" y="819">3</text><circle class="ci" cx="538" cy="812" r="5.500"/><text class="n" x="538" y="812">4</text><circle class="ci" cx="533" cy="842" r="5.500"/><text class="n" x="533" y="842">2</text><circle class="ci" cx="588" cy="842" r="5.500"/><text class="n" x="588" y="842">2</text><circle class="ci" cx="588" cy="890" r="5.500"/><text class="n" x="588" y="890">2</text><circle class="ci" cx="588" cy="902" r="5.500"/><text class="n" x="588" y="902">1</text>
</g>

<!-- B-B -->
<text x="689" y="733" font-size="18" fill="#00d800" text-anchor="middle" textLength="25" lengthAdjust="spacingAndGlyphs">B-B</text><path d="M675 735.500H701" stroke="#0020d0" stroke-width="2"/><path d="M675 737H701" stroke="#10d0d0"/>
<text class="gt" x="683" y="748">C</text><path class="g" d="M687 746h5l-2-2M693 746v6"/><text class="gt" x="683" y="937">C</text><path class="g" d="M687 939h5l-2 2M693 939v-6"/>
<rect x="656.500" y="788.500" width="69" height="108" fill="none" stroke="#d8d8d8" stroke-width="1.300"/>
<path d="M659 791V894H723V791zM659 802H723M659 814H723M659 826H723M659 838H723M659 850H723M659 862H723M659 874H723M659 884H723M668 791V894M679 791V894M690 791V894M701 791V894M712 791V894" fill="none" stroke="#f00010" stroke-width="1.200"/>
<rect x="668" y="804" width="45" height="78" rx="7" fill="none" stroke="#10d4d4" stroke-dasharray="3 2"/>
<path class="c" d="M658 826H731M674 843H734M692 809V898M679 882V898"/>
<g>
<circle class="ci" cx="737" cy="826" r="5.500"/><text class="n" x="737" y="826">3</text><circle class="ci" cx="740" cy="843" r="5.500"/><text class="n" x="740" y="843">6</text><circle class="ci" cx="679" cy="904" r="5.500"/><text class="n" x="679" y="904">4</text><circle class="ci" cx="692" cy="904" r="5.500"/><text class="n" x="692" y="904">7</text>
</g>

<!-- slot detail -->
<text class="h" font-size="15" x="815" y="750" textLength="110" lengthAdjust="spacingAndGlyphs">吊杆槽口补强钢筋示意图</text><path d="M759 759.500H869" stroke="#0020d0" stroke-width="2"/><path d="M759 761H869" stroke="#10b0b0"/>
<text class="gt" x="808" y="774">E</text><path class="g" d="M812 774h5l-2-2M818 774v4"/><text class="gt" x="808" y="912">E</text><path class="g" d="M812 912h5l-2 2M818 912v-4"/>
<rect x="783.500" y="788.500" width="68" height="108" fill="none" stroke="#d0d0d0" stroke-width="1.200"/>
<path class="w" d="M811 897V884H825V897"/><path class="c" d="M803 895l4-16H821L832 895M818 875V879M807 879l-4 16M827 879l4 16M785 896L792 902H862"/>
<rect x="785" y="896" width="67" height="6" fill="url(#hat2)"/>
<circle class="ci" cx="818" cy="869" r="5.500"/><text class="n" x="818" y="869">1'</text><circle class="ci" cx="867" cy="902" r="5.500"/><text class="n" x="867" y="902">1</text>
<path class="g" d="M776 877V908M772 888H783M772 897H783"/><text class="gt" transform="rotate(-90 770 885)" x="770" y="885">10</text><text class="gt" transform="rotate(-90 770 902)" x="770" y="902">5.5</text>

<!-- rebar details -->
<path class="r" d="M468 973H528l-2 4 6-7-1 3H606M472 1010.500H572M465 1050H523l-3 4 7-8-2 4H602"/>
<path class="g" d="M564 973l12-13H600M546 1010l10-14H580M560 1050l14-14H597M658 1007l9-16H692M715 1025l8-14H748M829 953l8-15H864M827 1015l8-15H858M826 1059l8-15H858"/>
<path class="dr" d="M663 977H643V1042H658V972M791 953H865V972H791zM783 1011V1015H873V1011M789 1054V1059H865V1054"/>
<path class="r" d="M709 1020l11 12"/>
<g class="t10">
<text class="ct" x="590" y="957" textLength="20" lengthAdjust="spacingAndGlyphs">24Φ25</text><text class="ct" x="590" y="966" textLength="15" lengthAdjust="spacingAndGlyphs">8210</text><text class="ct" x="493" y="968" textLength="16" lengthAdjust="spacingAndGlyphs">8210</text>
<text class="ct" x="570" y="993" textLength="20" lengthAdjust="spacingAndGlyphs">52Φ25</text><text class="ct" x="570" y="1001" textLength="12" lengthAdjust="spacingAndGlyphs">320</text><text class="ct" x="506" y="1005" textLength="12" lengthAdjust="spacingAndGlyphs">320</text>
<text class="ct" x="588" y="1032" textLength="20" lengthAdjust="spacingAndGlyphs">68Φ16</text><text class="ct" x="588" y="1040" textLength="15" lengthAdjust="spacingAndGlyphs">8210</text><text class="ct" x="491" y="1045" textLength="16" lengthAdjust="spacingAndGlyphs">8210</text>
<text class="ct" x="679" y="987" textLength="26" lengthAdjust="spacingAndGlyphs">1368Φ12</text><text class="ct" x="679" y="995" textLength="12" lengthAdjust="spacingAndGlyphs">416</text><text class="ct" x="662" y="972">9</text><text class="ct" transform="rotate(-90 639 1002)" x="639" y="1002">183</text><text class="ct" x="650" y="1038">18</text>
<text class="ct" x="737" y="1007" textLength="26" lengthAdjust="spacingAndGlyphs">2160Φ12</text><text class="ct" x="737" y="1015">35</text><text class="ct" x="711" y="1028">35</text>
<text class="ct" x="851" y="935" textLength="26" lengthAdjust="spacingAndGlyphs">1368Φ12</text><text class="ct" x="851" y="943" textLength="12" lengthAdjust="spacingAndGlyphs">267</text><text class="ct" transform="rotate(-90 784 963)" x="784" y="963">21.5</text><text class="ct" x="826" y="977" textLength="12" lengthAdjust="spacingAndGlyphs">113</text><text class="ct" x="868" y="950">9</text>
<text class="ct" x="848" y="996" textLength="19" lengthAdjust="spacingAndGlyphs">96Φ12</text><text class="ct" x="848" y="1005" textLength="12" lengthAdjust="spacingAndGlyphs">199</text><text class="ct" x="811" y="1011" textLength="12" lengthAdjust="spacingAndGlyphs">183</text><text class="ct" x="780" y="1012">8</text><text class="ct" x="876" y="1012">8</text>
<text class="ct" x="847" y="1040" textLength="21" lengthAdjust="spacingAndGlyphs">192Φ12</text><text class="ct" x="847" y="1048" textLength="12" lengthAdjust="spacingAndGlyphs">129</text><text class="ct" x="812" y="1054" textLength="12" lengthAdjust="spacingAndGlyphs">113</text><text class="ct" x="785" y="1056">8</text><text class="ct" x="868" y="1056">8</text>
</g>
<g>
<circle class="ci" cx="606" cy="961" r="5.500"/><text class="n" x="606" y="961">1</text><circle class="ci" cx="585" cy="996" r="5.500"/><text class="n" x="585" y="996">1'</text><circle class="ci" cx="603" cy="1036" r="5.500"/><text class="n" x="603" y="1036">2</text><circle class="ci" cx="697" cy="991" r="5.500"/><text class="n" x="697" y="991">3</text><circle class="ci" cx="754" cy="1011" r="5.500"/><text class="n" x="754" y="1011">5</text><circle class="ci" cx="870" cy="938" r="5.500"/><text class="n" x="870" y="938">4</text><circle class="ci" cx="864" cy="1000" r="5.500"/><text class="n" x="864" y="1000">6</text><circle class="ci" cx="864" cy="1044" r="5.500"/><text class="n" x="864" y="1044">7</text>
</g>

<!-- table 1 -->
<text class="h" font-size="15" x="1026" y="748" textLength="89" lengthAdjust="spacingAndGlyphs">一根系杆钢筋明细表</text><path d="M979 756.500H1075" stroke="#0020d0" stroke-width="2"/><path d="M979 758H1075" stroke="#10d0d0"/>
<path d="M936.500 783V923M965.500 783V923M991 783V923M1015.500 783V923M1045 783V923M1074.500 783V923M1103.500 783V923M917 808.500H1134M917 822.500H1103.500M917 837H1134M917 851.500H1134M917 865.500H1103.500M917 880H1103.500M917 894.500H1103.500M917 908.500H1103.500" fill="none" stroke="#10c8a8" stroke-width="1.200"/>
<rect x="917.500" y="783" width="217" height="140" fill="none" stroke="#00d000" stroke-width="1.300"/>
<g class="t8">
<text class="h" font-size="8" x="927" y="795">编号</text>
<text class="h" font-size="8" x="951" y="790">直径</text><text class="ct" x="951" y="800">(mm)</text>
<text class="h" font-size="8" x="978" y="790">单根长</text><text class="ct" x="978" y="800">(cm)</text>
<text class="h" font-size="8" x="1003" y="795">根数</text>
<text class="h" font-size="8" x="1030" y="790">共长</text><text class="ct" x="1030" y="800">(m)</text>
<text class="h" font-size="8" x="1060" y="790">单位重</text><text class="ct" x="1060" y="800">(kg/m)</text>
<text class="h" font-size="8" x="1089" y="790">总重</text><text class="ct" x="1089" y="800">(kg)</text>
<text class="h" font-size="8" x="1119" y="790">合计</text><text class="ct" x="1119" y="800">(kg)</text>
</g>
<g class="t8">
<text class="ct" x="927" y="815.500">1</text><text class="ct" x="951" y="815.500">⌀25</text><text class="ct" x="978" y="815.500">8210.0</text><text class="ct" x="1003" y="815.500">24</text><text class="ct" x="1030" y="815.500">1970.4</text><text class="ct" x="1060" y="815.500">3.850</text><text class="ct" x="1089" y="815.500">7586.0</text>
<text class="ct" x="927" y="830">1'</text><text class="ct" x="951" y="830">⌀25</text><text class="ct" x="978" y="830">320.0</text><text class="ct" x="1003" y="830">52</text><text class="ct" x="1030" y="830">166.4</text><text class="ct" x="1060" y="830">3.850</text><text class="ct" x="1089" y="830">640.6</text>
<text class="ct" x="927" y="844">2</text><text class="ct" x="951" y="844">⌀16</text><text class="ct" x="978" y="844">8210.0</text><text class="ct" x="1003" y="844">68</text><text class="ct" x="1030" y="844">5582.8</text><text class="ct" x="1060" y="844">1.580</text><text class="ct" x="1089" y="844">8820.8</text>
<text class="ct" x="927" y="858.500">3</text><text class="ct" x="951" y="858.500">⌀12</text><text class="ct" x="978" y="858.500">416.0</text><text class="ct" x="1003" y="858.500">1368</text><text class="ct" x="1030" y="858.500">5690.9</text><text class="ct" x="1060" y="858.500">0.888</text><text class="ct" x="1089" y="858.500">5053.5</text>
<text class="ct" x="927" y="873">4</text><text class="ct" x="951" y="873">⌀12</text><text class="ct" x="978" y="873">287.0</text><text class="ct" x="1003" y="873">1368</text><text class="ct" x="1030" y="873">3926.2</text><text class="ct" x="1060" y="873">0.888</text><text class="ct" x="1089" y="873">3486.4</text>
<text class="ct" x="927" y="887">5</text><text class="ct" x="951" y="887">⌀12</text><text class="ct" x="978" y="887">35.0</text><text class="ct" x="1003" y="887">2160.0</text><text class="ct" x="1030" y="887">756.0</text><text class="ct" x="1060" y="887">0.888</text><text class="ct" x="1089" y="887">671.3</text>
<text class="ct" x="927" y="901.500">6</text><text class="ct" x="951" y="901.500">⌀12</text><text class="ct" x="978" y="901.500">199.0</text><text class="ct" x="1003" y="901.500">96</text><text class="ct" x="1030" y="901.500">191.0</text><text class="ct" x="1060" y="901.500">0.888</text><text class="ct" x="1089" y="901.500">169.6</text>
<text class="ct" x="927" y="916">7</text><text class="ct" x="951" y="916">⌀12</text><text class="ct" x="978" y="916">129.0</text><text class="ct" x="1003" y="916">192</text><text class="ct" x="1030" y="916">247.7</text><text class="ct" x="1060" y="916">0.888</text><text class="ct" x="1089" y="916">219.9</text>
<text class="ct" x="1119" y="823">8226.6</text><text class="ct" x="1119" y="844">8820.8</text><text class="ct" x="1119" y="887">9600.7</text>
</g>

<!-- table 2 -->
<text class="h" font-size="15" x="1030" y="967" textLength="89" lengthAdjust="spacingAndGlyphs">全桥系杆数量汇总表</text><path d="M982 976.500H1077" stroke="#0020d0" stroke-width="2"/><path d="M982 978H1077" stroke="#10d0d0"/>
<rect x="945" y="988" width="169" height="29" fill="none" stroke="#00c800" stroke-width="1.300"/>
<path d="M986.500 988V1017M1016.500 988V1017M1046.500 988V1017M1078 988V1017M945 1002.500H1114" stroke="#10c8a8" stroke-width="1.200"/>
<g class="t7">
<text class="ct" x="966" y="995">直径(mm)</text><text class="ct" x="1001" y="995">⌀25</text><text class="ct" x="1031" y="995">⌀16</text><text class="ct" x="1062" y="995">⌀12</text><text class="ct" x="1096" y="995" textLength="32" lengthAdjust="spacingAndGlyphs">C50混凝土</text>
<text class="ct" x="966" y="1010">合计(kg)</text><text class="ct" x="1001" y="1010" textLength="27" lengthAdjust="spacingAndGlyphs">16453.2</text><text class="ct" x="1031" y="1010" textLength="27" lengthAdjust="spacingAndGlyphs">17641.6</text><text class="ct" x="1062" y="1010" textLength="27" lengthAdjust="spacingAndGlyphs">19201.4</text><text class="ct" x="1096" y="1010" textLength="32" lengthAdjust="spacingAndGlyphs">199.3(m³)</text>
</g>

<!-- E-E -->
<text x="1385" y="729" font-size="18" fill="#00d800" text-anchor="middle" textLength="22" lengthAdjust="spacingAndGlyphs">E-E</text><path d="M1372 731.500H1397" stroke="#0020d0"/><path d="M1372 733H1397" stroke="#10d0d0"/>
<path class="w" d="M1298 769H1465V790M1298 769V797H1465V790M1366.500 797V782H1381V797"/>
<path class="c" d="M1298 769V783l-2 3 4 4-2 2V797M1465 769V783l3 3-4 4 1 2"/>
<path d="M1327 785H1420M1298 794H1465" stroke="#f00000"/>
<path d="M1373 753V800" stroke="#e8d000" stroke-dasharray="7 2"/>
<path class="c" d="M1373 762L1384 754H1420M1376.500 788L1438.500 818H1474.500M1414 785L1422 776H1431M1453 787V795"/>
<text class="ct" x="1401" y="749" style="font-size:7px">吊杆中心线</text><text class="ct" x="1457" y="814" style="font-size:7px">吊杆槽口</text>
<circle class="ci" cx="1437" cy="778" r="5.500"/><text class="n" x="1437" y="778">1'</text><circle class="ci" cx="1453" cy="781" r="5.500"/><text class="n" x="1453" y="781">1</text>
<path class="da" d="M1327 806H1373"/><path class="da" d="M1373 806H1420"/><path class="g" d="M1327 795V810M1420 795V810M1373 800V810"/><text class="gt" x="1351" y="801">160</text><text class="gt" x="1396" y="801">160</text>

<!-- notes -->
<g>
<text class="nt" x="1175" y="833">注:</text>
<text class="nt" x="1185" y="851" textLength="210" lengthAdjust="spacingAndGlyphs">1、本图尺寸除钢筋直径以毫米计外，其余均以厘米为单位。</text>
<text class="nt" x="1185" y="868" textLength="278" lengthAdjust="spacingAndGlyphs">2、浇筑系杆中段有与吊杆、横梁等相连接的预埋件及预留孔道，详见各有关图</text>
<text class="nt" x="1195" y="885" textLength="253" lengthAdjust="spacingAndGlyphs">纸。浇筑系杆混凝土前，注意检查，吊杆预埋钢管与系杆普通主筋焊接。</text>
<text class="nt" x="1185" y="902" textLength="155" lengthAdjust="spacingAndGlyphs">3、浇筑砼时，须精心施工，以保证砼密实。</text>
<text class="nt" x="1185" y="920" textLength="278" lengthAdjust="spacingAndGlyphs">4、系杆浇筑时，请注意中横梁搭接钢筋，横向和纵向预应力波纹管，中横梁锚</text>
<text class="nt" x="1196" y="937" textLength="107" lengthAdjust="spacingAndGlyphs">下钢筋网及螺旋钢筋等的预埋。</text>
<text class="nt" x="1185" y="954" textLength="278" lengthAdjust="spacingAndGlyphs">5、N1钢筋在吊杆槽口处，可以局部截断，但必须设置补强钢筋（如图N1'），</text>
<text class="nt" x="1195" y="971" textLength="272" lengthAdjust="spacingAndGlyphs">N3、N4钢筋在吊杆槽头及钢管处截断，必须补焊钢筋，保持箍筋闭合。其余</text>
<text class="nt" x="1195" y="988" textLength="124" lengthAdjust="spacingAndGlyphs">普通钢筋若与之相碰，可适当避让。</text>
<text class="nt" x="1185" y="1006" textLength="183" lengthAdjust="spacingAndGlyphs">6、N5钢筋沿系杆内腹腔倒角表面间距15cm布置。</text>
<text class="nt" x="1185" y="1023" textLength="180" lengthAdjust="spacingAndGlyphs">7、本图只计入1#、13#吊杆之间系杆的工程量。</text>
<text class="nt" x="1185" y="1040" textLength="222" lengthAdjust="spacingAndGlyphs">8、系杆接头处各对应钢筋采用双面搭焊接，焊缝长不小于5d。</text>
<text class="nt" x="1185" y="1056" textLength="228" lengthAdjust="spacingAndGlyphs">9、钢筋N11、N11a工程量计入《主桥拱脚普通钢筋布置图》。</text>
</g>

<!-- UCS icon -->
<path d="M61 1259V1305M66.500 1309H112" stroke="#d8d8d8" fill="none"/><rect x="57.500" y="1305" width="9" height="9" fill="none" stroke="#d8d8d8"/>
<text x="69" y="1254" font-size="16" fill="#d8d8d8" text-anchor="middle">Y</text><text x="123" y="1307" font-size="16" fill="#d8d8d8" text-anchor="middle">X</text>

<!-- command history -->
<rect x="316" y="1232" width="130" height="22" rx="2" fill="#595b5e"/>
<rect x="316" y="1259" width="428" height="22" rx="2" fill="#595b5e"/>
<rect x="316" y="1286" width="746" height="22" rx="2" fill="#595b5e"/>
<text class="cmd" x="318" y="1249" textLength="126" lengthAdjust="spacingAndGlyphs">命令: '_.zoom</text>
<text class="cmd" x="318" y="1276" textLength="424" lengthAdjust="spacingAndGlyphs">指定窗口的角点, 输入比例因子 (nX 或 nXP), 或者</text>
<text class="cmd" x="318" y="1303" textLength="742" lengthAdjust="spacingAndGlyphs">[全部(A)/中心(C)/动态(D)/范围(E)/上一个(P)/比例(S)/窗口(W)/对象(O)] &lt;实时&gt;: _e</text>

<!-- command line -->
<rect x="254" y="1312" width="56" height="25" fill="#2a3038"/>
<rect x="258" y="1315" width="4" height="19" fill="#8a8f96" opacity=".7"/>
<path d="M268 1320l7 8M275 1320l-7 8" stroke="#c8ccd2" stroke-width="1.500"/>
<path d="M300 1316c-3 0-4 3-3 5l-7 11 2 2 7-11c3 1 5-1 5-4l-2 2-2-2z" fill="#c8ccd2"/>
<rect x="310" y="1312" width="1077" height="25" rx="1" fill="#bdbebf"/>
<rect x="315" y="1319" width="14" height="12" fill="#444" stroke="#222"/><path d="M317 1326h4" stroke="#ddd"/><path d="M332 1323h6l-3 4z" fill="#333"/>
<text x="348" y="1330" font-size="16" font-style="italic" fill="#6a6a6a">键入命令</text>
<path d="M1376 1325h8l-4-5z" fill="#444"/>

<!-- layout tabs -->
<path d="M20 1338l3 8q1 5 5 5H60q4 0 5-5l4-8z" fill="#3b4453"/><path d="M66 1338l3 8q1 5 5 5h46q4 0 5-5l2-8z" fill="#2b323f"/><path d="M133 1338l2 8q1 5 4 5h9q3 0 4-5l2-8z" fill="#2b323f"/>
<text x="27" y="1353" font-size="12" font-weight="700" fill="#eee">模型</text><text x="74" y="1352" font-size="12" fill="#aeb4bf">Layout1</text>
<path d="M146 1343v9M141 1347.500h10" stroke="#aeb4bf" stroke-width="1.600"/>

<!-- status bar -->
<g fill="#3b4453"><rect x="1065" y="1340" width="30" height="24"/><rect x="1098" y="1340" width="64" height="24"/><rect x="1165" y="1340" width="104" height="24"/><rect x="1270" y="1340" width="64" height="24"/><rect x="1335" y="1340" width="24" height="24"/><rect x="1362" y="1340" width="106" height="24"/><rect x="1471" y="1340" width="40" height="24"/><rect x="1512" y="1340" width="24" height="24"/><rect x="1539" y="1340" width="24" height="24"/><rect x="1566" y="1340" width="22" height="24"/><rect x="1591" y="1340" width="49" height="24"/></g>
<rect x="1295" y="1341" width="22" height="22" fill="#5f93c7"/><rect x="1363" y="1341" width="22" height="22" fill="#5f93c7"/>
<text x="1080" y="1357" font-size="12" fill="#eee" text-anchor="middle">模型</text>
<path d="M1103 1345h14M1103 1350h14M1103 1355h14M1106 1343v15M1110 1343v15M1114 1343v15" stroke="#dfe2e6" fill="none"/>
<path d="M1128 1346h1M1133 1346h1M1138 1346h1M1128 1351h1M1133 1351h1M1138 1351h1M1128 1356h1M1133 1356h1M1138 1356h1" stroke="#dfe2e6" stroke-width="1.500"/>
<path d="M1150 1350h8l-4 5z" fill="#dfe2e6"/>
<path d="M1170 1344v15h15M1170 1352h7v7" fill="none" stroke="#dfe2e6"/>
<circle cx="1199" cy="1352" r="6.500" fill="none" stroke="#c8ccd2"/><path d="M1196 1358l10-13" stroke="#c8ccd2"/><path d="M1221 1350h8l-4 5z" fill="#dfe2e6"/>
<path d="M1234 1344l13 15" stroke="#e06060"/><path d="M1240 1344v15" stroke="#50c060"/><circle cx="1240" cy="1351" r="1.500" fill="#dfe2e6"/><path d="M1257 1350h8l-4 5z" fill="#dfe2e6"/>
<path d="M1274 1359h14M1274 1359l11-10" stroke="#dfe2e6" fill="none"/>
<rect x="1299" y="1346" width="15" height="13" fill="none" stroke="#fff" stroke-width="1.300"/><rect x="1298" y="1344" width="4" height="4" fill="#5f93c7" stroke="#fff"/>
<path d="M1322 1350h8l-4 5z" fill="#dfe2e6"/>
<path d="M1339 1345h16M1339 1351h16M1339 1357h10" stroke="#dfe2e6" stroke-width="2"/>
<path d="M1374 1343l3 10 3 6-6-3-6 3 3-6z" fill="#fff"/><circle cx="1380" cy="1346" r="2.500" fill="none" stroke="#fff"/>
<path d="M1398 1343l3 10 3 6-6-3-6 3 3-6z" fill="#cfd2d6"/><path d="M1404 1344l-2 3 4 0z" fill="#fff"/>
<path d="M1422 1343l3 10 3 6-6-3-6 3 3-6z" fill="#cfd2d6"/>
<text x="1445" y="1357" font-size="12" fill="#dfe2e6" text-anchor="middle">1:1</text><path d="M1456 1350h8l-4 5z" fill="#dfe2e6"/>
<circle cx="1483" cy="1352" r="5" fill="none" stroke="#d8dbe0" stroke-width="3"/><path d="M1483 1344v3M1483 1357v3M1475 1352h3M1488 1352h3M1477 1346l2 2M1489 1346l-2 2M1477 1358l2-2M1489 1358l-2-2" stroke="#d8dbe0" stroke-width="2"/>
<path d="M1499 1350h8l-4 5z" fill="#dfe2e6"/>
<path d="M1524 1344v16M1516 1352h16" stroke="#e6e6e6" stroke-width="2"/>
<rect x="1543" y="1344" width="6" height="6" fill="none" stroke="#dfe2e6"/><circle cx="1556" cy="1348" r="3" fill="none" stroke="#dfe2e6"/><path d="M1546 1360l4-6 4 6z" fill="none" stroke="#dfe2e6"/>
<rect x="1570" y="1343" width="12" height="12" fill="#3a6fb0"/><rect x="1570" y="1352" width="12" height="6" fill="#e8b040"/><path d="M1576 1353l3 4 6-7" stroke="#50c070" stroke-width="2" fill="none"/>
<rect x="1595" y="1346" width="16" height="12" fill="none" stroke="#dfe2e6"/><path d="M1598 1355l3-3M1608 1349l-3 2" stroke="#dfe2e6"/>
<path d="M1619 1346h16M1619 1352h16M1619 1358h16" stroke="#dfe2e6" stroke-width="2"/>
</svg>
</body></html>
